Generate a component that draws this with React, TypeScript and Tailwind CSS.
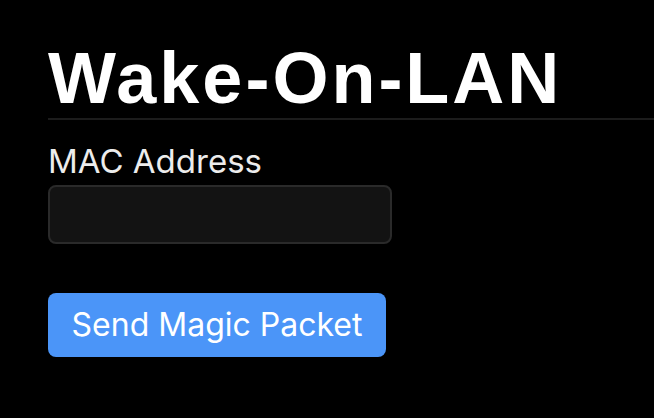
import React, { useState } from "react";

export default function App() {
  const [mac, setMac] = useState("");

  return (
    <div className="min-h-screen w-full bg-black text-white">
      <div className="pl-12 pt-[42px]">
        {/* Titre */}
        <h1
          className="border-b-2 border-[#1c1c1c] pb-[4px] text-[72px] font-bold leading-none tracking-[3px] text-white"
          style={{ fontFamily: '"Liberation Sans", Arial, sans-serif' }}
        >
          Wake-On-LAN
        </h1>

        <form
          className="flex flex-col items-start pt-[25px]"
          style={{ fontFamily: 'Inter, "Noto Sans", sans-serif' }}
          onSubmit={(e) => e.preventDefault()}
        >
          <label
            htmlFor="mac"
            className="text-[33px] leading-none text-[#ececec]"
          >
            MAC Address
          </label>
          <input
            id="mac"
            value={mac}
            onChange={(e) => setMac(e.target.value)}
            className="mt-[7px] h-[59px] w-[344px] rounded-lg border-2 border-[#2a2a2a] bg-[#131313] px-4 text-[28px] text-white outline-none"
          />
          <button
            type="submit"
            className="mt-[49px] h-[64px] w-[338px] rounded-lg bg-[#4b95f8] text-[32px] text-white"
          >
            Send Magic Packet
          </button>
        </form>
      </div>
    </div>
  );
}
